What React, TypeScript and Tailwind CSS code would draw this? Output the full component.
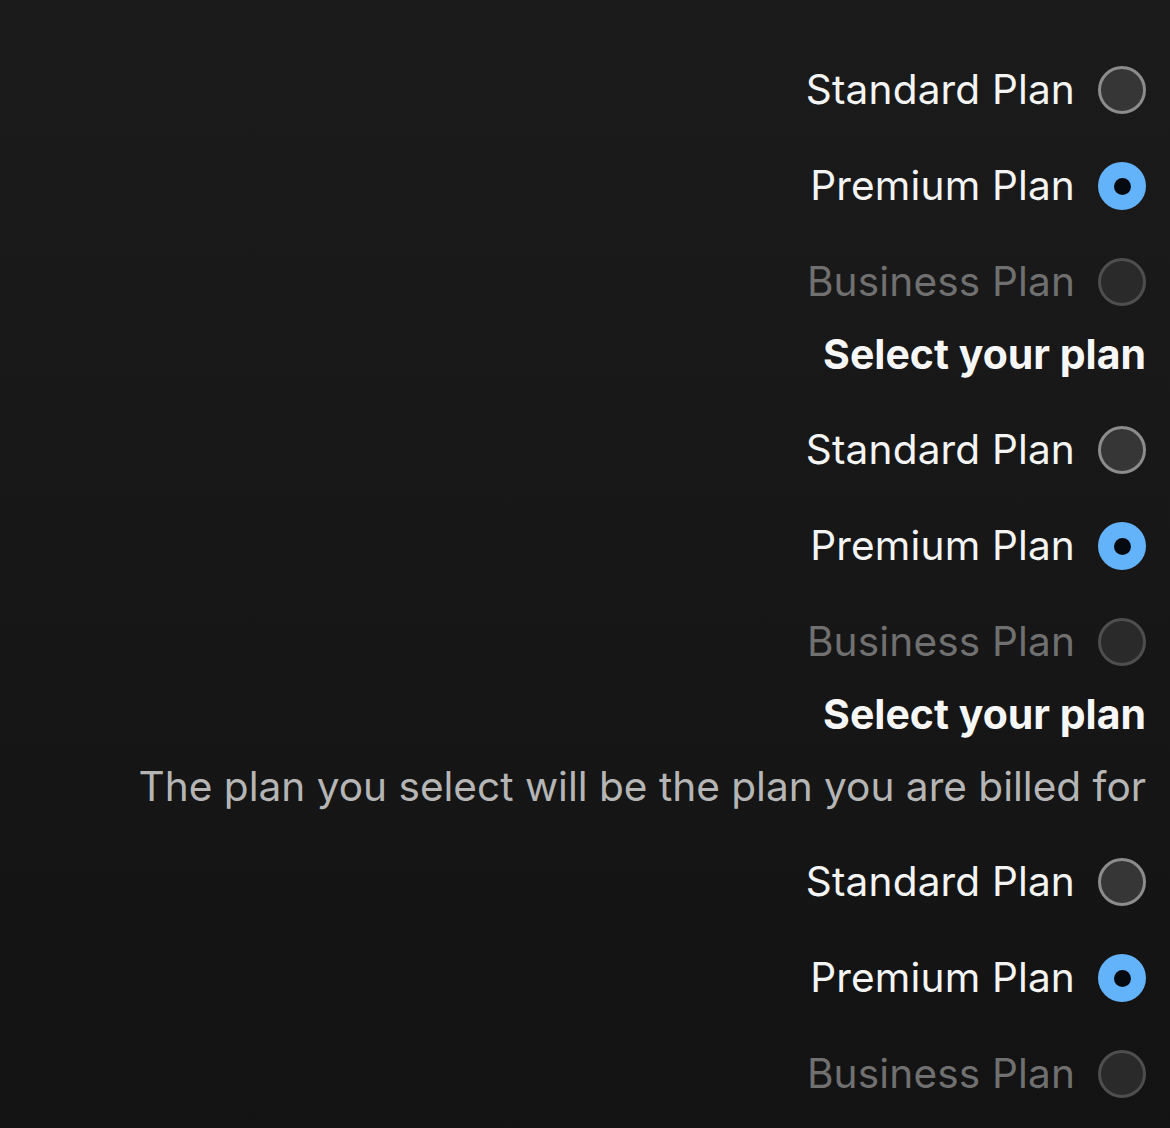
import React from "react";

type Opt = { label: string; state: "off" | "on" | "disabled" };
const opts: Opt[] = [
  { label: "Standard Plan", state: "off" },
  { label: "Premium Plan", state: "on" },
  { label: "Business Plan", state: "disabled" },
];

function Radio({ state }: { state: Opt["state"] }) {
  if (state === "on") {
    return (
      <div className="w-[48px] h-[48px] rounded-full bg-[#63b3fb] flex items-center justify-center shrink-0">
        <div className="w-[17px] h-[17px] rounded-full bg-[#050a10]" />
      </div>
    );
  }
  if (state === "disabled") {
    return <div className="w-[48px] h-[48px] rounded-full bg-[#2a2a2a] border-[3px] border-[#4e4e4e] shrink-0" />;
  }
  return <div className="w-[48px] h-[48px] rounded-full bg-[#363636] border-[3px] border-[#8c8c8c] shrink-0" />;
}

function Group() {
  return (
    <div className="flex flex-col">
      {opts.map((o) => (
        <div key={o.label} className="h-[96px] flex items-center justify-end gap-[23px]">
          <span
            className={
              "text-[40.6px] leading-[48px] tracking-[0.15px] " +
              (o.state === "disabled" ? "text-[#707070]" : "text-[#f4f4f4]")
            }
          >
            {o.label}
          </span>
          <Radio state={o.state} />
        </div>
      ))}
    </div>
  );
}

export default function App() {
  return (
    <div
      className="min-h-[1128px] w-full bg-gradient-to-b from-[#1b1b1b] to-[#131313] pt-[42px] pr-[24px] flex flex-col items-end"
      style={{ fontFamily: "Inter, 'Noto Sans', sans-serif" }}
    >
      <Group />
      <div className="h-[50px] flex items-center text-[41px] font-bold text-[#f7f7f7]">
        Select your plan
      </div>
      <div className="mt-[22px]">
        <Group />
      </div>
      <div className="h-[50px] flex items-center text-[41px] font-bold text-[#f7f7f7]">
        Select your plan
      </div>
      <div className="mt-[22px] h-[50px] flex items-center text-[40.6px] text-[#b5b5b5]">
        The plan you select will be the plan you are billed for
      </div>
      <div className="mt-[22px]">
        <Group />
      </div>
    </div>
  );
}
